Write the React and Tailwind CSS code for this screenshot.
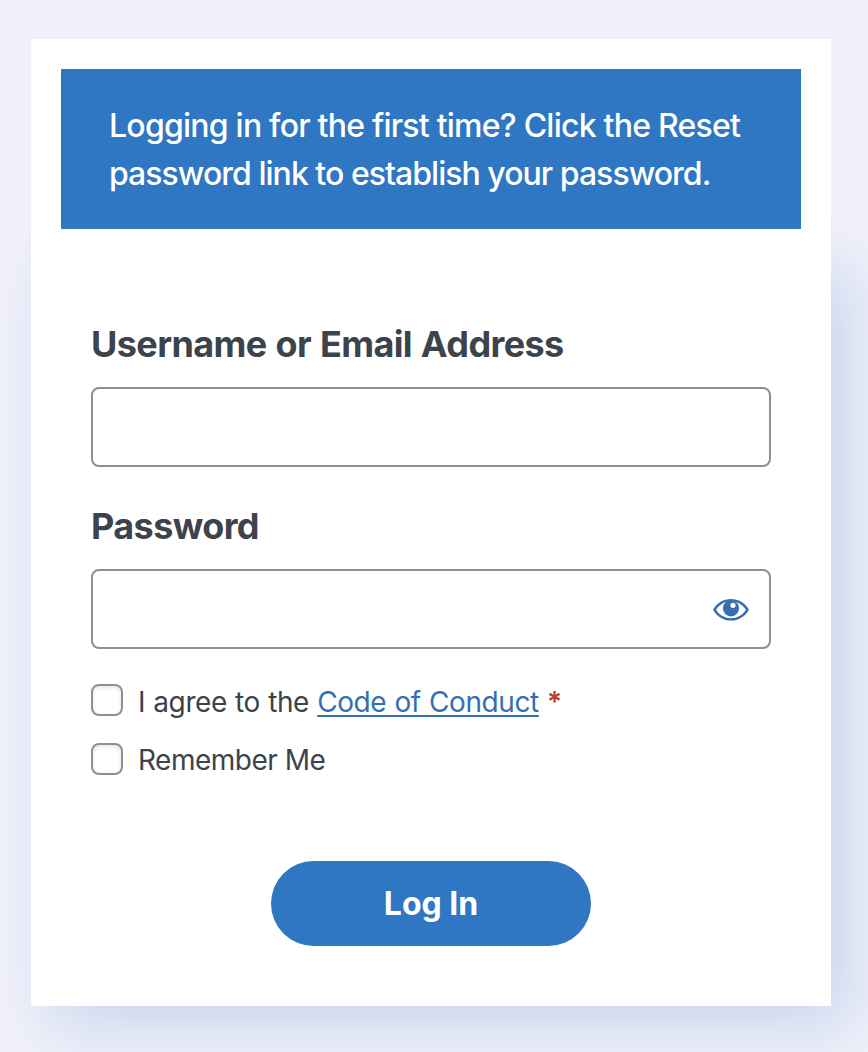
function EyeIcon() {
  return (
    <svg viewBox="0 0 40 40" className="mt-px size-10" fill="none" aria-hidden="true">
      <path
        fillRule="evenodd"
        fill="#3470b1"
        d="M2 19.7C6 12.8 12.6 9 20 9S34 12.8 38 19.7C34 26.8 27.4 30.6 20 30.6S6 26.8 2 19.7ZM5.1 19.7C8.6 25.3 14 28.2 20 28.2S31.4 25.3 34.9 19.7C31.4 14.2 26 11.2 20 11.2S8.6 14.2 5.1 19.7Z"
      />
      <path fillRule="evenodd" fill="#3470b1" d="M20 10.2a8.1 8.1 0 1 1 0 16.2a8.1 8.1 0 0 1 0-16.2Zm2 2.5a2.6 2.6 0 1 0 0 5.2a2.6 2.6 0 0 0 0-5.2Z" />
    </svg>
  );
}

function Checkbox({ children }) {
  return (
    <label className="flex h-8 items-center">
      <input
        type="checkbox"
        className="size-8 shrink-0 appearance-none rounded-lg border-2 border-[#8c8f94] bg-white shadow-[inset_0_2px_4px_rgba(0,0,0,0.1)]"
      />
      {children}
    </label>
  );
}

function Field({ label, type, children }) {
  return (
    <label className="block">
      <span className="block text-[36px] leading-[54px] font-bold tracking-[-0.6px] [word-spacing:0.9px] whitespace-nowrap">{label}</span>
      <span className="mt-4 flex h-20 items-center rounded-lg border-2 border-[#8c8f94] bg-white pr-[18px]">
        <input type={type} className="h-full min-w-0 flex-1 bg-transparent px-4 text-3xl outline-none" />
        {children}
      </span>
    </label>
  );
}

export default function App() {
  return (
    <main className="h-[1052px] w-[868px] overflow-hidden bg-[#f0f0fa] pt-[39px] pl-[31px] font-['Inter',sans-serif] text-[#3c434a]">
      <div className="relative z-10 w-[800px] bg-white px-[30px] pt-[30px] pb-5">
        <p className="h-40 bg-[#2f77c2] px-12 py-[33px] text-[32px] leading-12 font-[450] tracking-[-0.77px] whitespace-nowrap text-white">
          Logging in for the first time? Click the Reset
          <br />
          <span className="tracking-[-0.97px]">password link to establish your password.</span>
        </p>
      </div>
      <form className="flex h-[757px] w-[800px] flex-col bg-white px-[60px] pt-[68px] shadow-[20px_20px_60px_#c7d6ec]">
        <Field label="Username or Email Address" type="text" />
        <div className="mt-8">
          <Field label="Password" type="password">
            <button type="button" aria-label="Show password">
              <EyeIcon />
            </button>
          </Field>
        </div>
        <div className="mt-[35px] flex flex-col gap-[27px]">
          <Checkbox>
            <span className="ml-[15px] pt-[4px] text-[28px] leading-8 font-[430] tracking-[-0.4px] [word-spacing:0.7px] whitespace-nowrap">
              I agree to the{" "}
              <a href="#" className="text-[#3470b1] underline decoration-2 underline-offset-[3px]">Code of Conduct</a>{" "}
              <span className="font-semibold text-[#bf3b30]">*</span>
            </span>
          </Checkbox>
          <Checkbox>
            <span className="ml-[15px] pt-[2px] text-[28px] leading-8 font-[430] tracking-[-0.5px] whitespace-nowrap">Remember Me</span>
          </Checkbox>
        </div>
        <button type="button" className="mt-[86px] h-[85px] w-80 self-center rounded-full bg-[#2f77c2] text-[32px] font-bold text-white">
          Log In
        </button>
      </form>
    </main>
  );
}
